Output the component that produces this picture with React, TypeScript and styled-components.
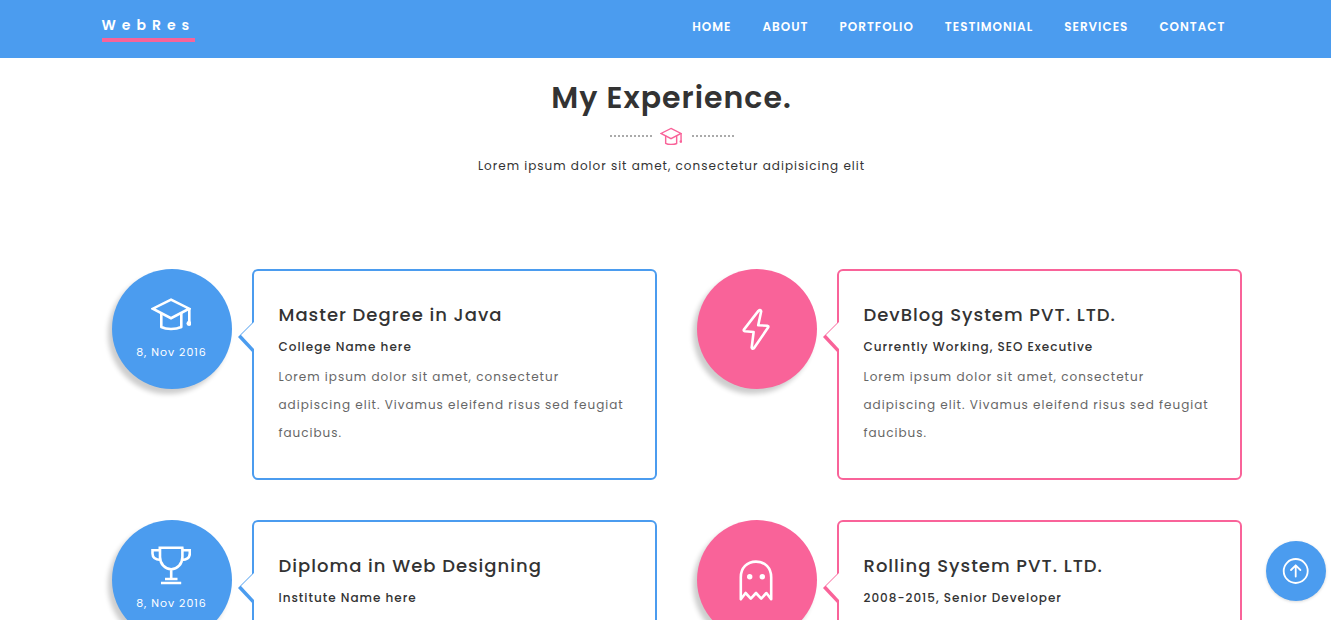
import React from "react";
import styled, { createGlobalStyle } from "styled-components";

const BLUE = "#4b9cef";
const PINK = "#f96399";

const GlobalStyle = createGlobalStyle`
  *, *::before, *::after { box-sizing: border-box; }
  body {
    margin: 0;
    background: #fff;
    color: #333;
    font-family: Poppins, Inter, "Open Sans", sans-serif;
    font-size: 12px;
    letter-spacing: 1px;
  }
  h1, h2, h3, p, ul { margin: 0; padding: 0; }
`;

const Header = styled.header`
  background: ${BLUE};
  padding-left: 12px;
`;

const Container = styled.div`
  max-width: 1170px;
  margin: 0 auto;
`;

const Bar = styled(Container)`
  display: flex;
  justify-content: space-between;
  align-items: flex-start;
  min-height: 58px;
  padding: 0 15px;
`;

const Logo = styled.a`
  margin-top: 12px;
  border-bottom: 4px solid ${PINK};
  color: #fff;
  font-size: 14px;
  font-weight: 600;
  line-height: 26px;
  letter-spacing: 6px;
  text-decoration: none;
`;

const Menu = styled.ul`
  display: flex;
  list-style: none;
`;

const MenuLink = styled.a`
  display: block;
  padding: 17px 16px 17px 15px;
  color: #fff;
  font-weight: 600;
  line-height: 20px;
  text-decoration: none;
  text-transform: uppercase;
`;

const Main = styled.main`
  padding-left: 12px;
`;

const Heading = styled.div`
  display: flex;
  flex-direction: column;
  align-items: center;
  padding-top: 20px;
  text-align: center;
`;

const Title = styled.h1`
  font-size: 30px;
  font-weight: 600;
  line-height: 40px;
`;

const Divider = styled.div`
  display: flex;
  align-items: center;
  gap: 8px;
  height: 20px;
  margin-top: 8px;
  color: ${PINK};
`;

const DividerIcon = styled.span`
  padding-right: 2px;
`;

const Dots = styled.span`
  width: 42px;
  border-top: 2px dotted #aaa;
`;

const Lead = styled.p`
  margin-top: 6px;
  line-height: 28px;
`;

const Timeline = styled.div`
  display: grid;
  grid-template-columns: 1fr 1fr;
  row-gap: 40px;
  padding: 89px 0 40px;
`;

const Entry = styled.article`
  display: flex;
  align-items: flex-start;
  gap: 20px;
  padding: 0 15px 0 25px;
`;

const Badge = styled.div<{ $tone: string }>`
  display: flex;
  flex: none;
  flex-direction: column;
  align-items: center;
  justify-content: center;
  gap: 6px;
  width: 120px;
  height: 120px;
  border-radius: 50%;
  background: ${(p) => p.$tone};
  box-shadow: -4px 5px 5px rgba(0, 0, 0, 0.2);
  color: #fff;
`;

const BadgeIcon = styled.span`
  display: flex;
  align-items: center;
  justify-content: center;
  height: 40px;
  padding-right: 2px;
`;

const BadgeDate = styled.time`
  font-size: 11px;
  line-height: 24px;
`;

const Card = styled.div<{ $tone: string }>`
  position: relative;
  flex: 1;
  padding: 30px 24px 31px 25px;
  border: 2px solid ${(p) => p.$tone};
  border-radius: 6px;

  &::before,
  &::after {
    content: "";
    position: absolute;
    right: 100%;
    border-style: solid;
    border-color: transparent;
  }
  &::before {
    top: 50px;
    border-width: 16px 16px 17px 0;
    border-right-color: ${(p) => p.$tone};
  }
  &::after {
    top: 51px;
    border-width: 13px 13px 14px 0;
    border-right-color: #fff;
  }
`;

const CardTitle = styled.h2`
  font-size: 18px;
  font-weight: 500;
  line-height: 28px;
`;

const CardSubtitle = styled.h3`
  margin-top: 4px;
  font-size: 12px;
  font-weight: 500;
  line-height: 28px;
`;

const CardText = styled.p`
  margin-top: 2px;
  color: #666;
  line-height: 28px;
`;

const TopButton = styled.button`
  position: fixed;
  right: 5px;
  bottom: 19px;
  display: flex;
  align-items: center;
  justify-content: center;
  width: 60px;
  height: 60px;
  padding: 0;
  border: 0;
  border-radius: 50%;
  background: ${BLUE};
  box-shadow: 0 1px 3px rgba(0, 0, 0, 0.15);
  color: #fff;
  cursor: pointer;
`;

const Stroke = styled.svg<{ $weight?: number }>`
  display: block;
  flex: none;
  fill: none;
  stroke: currentColor;
  stroke-width: ${(p) => p.$weight ?? 2.6};
  stroke-linejoin: round;
`;

const CapIcon = ({ width = 40 }: { width?: number }) => (
  <Stroke width={width} height={(width * 34) / 40} viewBox="0 0 40 34" aria-hidden="true">
    <path strokeLinejoin="miter" d="M20 2.6 38.2 11.7 20 21.2 1.8 11.7Z" />
    <path d="M10.3 16V30Q14 32 20 32T30.3 30V16M38.3 12V26" />
    <circle cx="37.9" cy="26.5" r="2.4" fill="currentColor" stroke="none" />
  </Stroke>
);

const TrophyIcon = () => (
  <Stroke width="40" height="40" viewBox="0 0 40 40" aria-hidden="true">
    <path
      strokeLinejoin="miter"
      d="M7.5 2.7H32.5M9 2.7V12C9 19 14 24.2 20.2 24.2S31.4 19 31.4 12V2.7M20.2 24V34M14 34H26.5M10 38H30.2M9 5.2H1.5V8.5C1.5 12.5 4.5 14.6 9.6 15M31.4 5.2H38.8V8.5C38.8 12.5 35.8 14.6 30.8 15"
    />
  </Stroke>
);

const BoltIcon = () => (
  <Stroke width="30" height="43" viewBox="0 0 30 43" aria-hidden="true">
    <path d="M17.4 2.9 2.9 21.6Q2.3 23 3.8 23.3L12.6 24 10.7 39.6Q11.3 41.6 12.9 40.3L27.2 19.3Q27.7 18 26.3 17.7L17.2 17.3 20.2 3.3Q19.3 1.2 17.4 2.9Z" />
  </Stroke>
);

const GhostIcon = () => (
  <Stroke width="34" height="42" viewBox="0 0 34 42" aria-hidden="true">
    <path d="M1.8 40.3V18.3C1.8 9 8 2.6 17 2.6S32.2 9 32.2 18.3V40.3L27.4 34 22.2 39.6 17 34 11.8 39.6 6.6 34Z" />
    <circle cx="10.7" cy="17.7" r="2.7" fill="currentColor" stroke="none" />
    <circle cx="23.3" cy="17.7" r="2.7" fill="currentColor" stroke="none" />
  </Stroke>
);

const UpIcon = () => (
  <Stroke $weight={1.8} width="28" height="28" viewBox="0 0 28 28" strokeLinecap="round" aria-hidden="true">
    <circle cx="13.7" cy="14" r="12" />
    <path d="M13.7 19.5V8.5M9 13 13.7 8.3 18.4 13" />
  </Stroke>
);

const menu = ["Home", "About", "Portfolio", "Testimonial", "Services", "Contact"];

const text =
  "Lorem ipsum dolor sit amet, consectetur adipiscing elit. Vivamus eleifend risus sed feugiat faucibus.";

const entries = [
  { tone: BLUE, icon: <CapIcon />, date: "8, Nov 2016", title: "Master Degree in Java", subtitle: "College Name here" },
  { tone: PINK, icon: <BoltIcon />, title: "DevBlog System PVT. LTD.", subtitle: "Currently Working, SEO Executive" },
  { tone: BLUE, icon: <TrophyIcon />, date: "8, Nov 2016", title: "Diploma in Web Designing", subtitle: "Institute Name here" },
  { tone: PINK, icon: <GhostIcon />, title: "Rolling System PVT. LTD.", subtitle: "2008-2015, Senior Developer" },
];

export default function App() {
  return (
    <>
      <GlobalStyle />
      <Header>
        <Bar>
          <Logo href="#home">WebRes</Logo>
          <nav>
            <Menu>
              {menu.map((item) => (
                <li key={item}>
                  <MenuLink href={`#${item.toLowerCase()}`}>{item}</MenuLink>
                </li>
              ))}
            </Menu>
          </nav>
        </Bar>
      </Header>
      <Main>
        <Container>
          <Heading>
            <Title>My Experience.</Title>
            <Divider>
              <Dots />
              <DividerIcon>
                <CapIcon width={22} />
              </DividerIcon>
              <Dots />
            </Divider>
            <Lead>Lorem ipsum dolor sit amet, consectetur adipisicing elit</Lead>
          </Heading>
          <Timeline>
            {entries.map((entry) => (
              <Entry key={entry.title}>
                <Badge $tone={entry.tone}>
                  <BadgeIcon>{entry.icon}</BadgeIcon>
                  {entry.date && <BadgeDate dateTime="2016-11-08">{entry.date}</BadgeDate>}
                </Badge>
                <Card $tone={entry.tone}>
                  <CardTitle>{entry.title}</CardTitle>
                  <CardSubtitle>{entry.subtitle}</CardSubtitle>
                  <CardText>{text}</CardText>
                </Card>
              </Entry>
            ))}
          </Timeline>
        </Container>
      </Main>
      <TopButton type="button" aria-label="Back to top">
        <UpIcon />
      </TopButton>
    </>
  );
}
